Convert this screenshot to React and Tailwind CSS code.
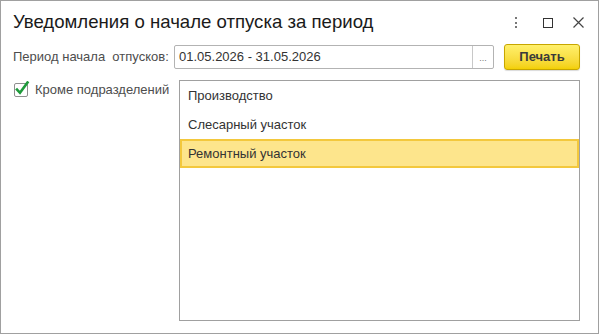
import React from "react";

const items = ["Производство", "Слесарный участок", "Ремонтный участок"];

const App = () => {
  return (
    <div
      className="w-[599px] h-[334px] border border-[#a0a0a0] bg-white flex flex-col text-[#333]"
      style={{ fontFamily: '"Liberation Sans", Arial, sans-serif' }}
    >
      {/* title bar */}
      <div className="h-[43px] flex items-center pl-[12px] pr-[14px]">
        <div className="text-[18.6px] leading-none text-[#1a1a1a] flex-1">
          Уведомления о начале отпуска за период
        </div>
        <div className="flex items-center">
          <div className="flex flex-col gap-[2.5px] w-[2px]">
            <span className="block w-[2px] h-[2px] bg-[#777]" />
            <span className="block w-[2px] h-[2px] bg-[#777]" />
            <span className="block w-[2px] h-[2px] bg-[#777]" />
          </div>
          <div className="ml-[26px] w-[10px] h-[10px] border-[1.5px] border-[#333]" />
          <svg className="ml-[20px]" width="11" height="11" viewBox="0 0 11 11">
            <path d="M0.5 0.5 L10.5 10.5 M10.5 0.5 L0.5 10.5" stroke="#444" strokeWidth="1.2" />
          </svg>
        </div>
      </div>

      {/* period row */}
      <div className="h-[26px] flex items-center pl-[12px]">
        <div className="w-[161px] text-[13px] text-[#4d4d4d] whitespace-pre">
          Период начала  отпусков:
        </div>
        <div className="w-[320px] h-[24px] border border-[#b3b3b3] rounded-[2px] flex bg-white">
          <div className="flex-1 flex items-center pl-[4px] text-[13px] text-[#333]">
            01.05.2026 - 31.05.2026
          </div>
          <div className="w-[21px] border-l border-[#c8c8c8] flex items-end justify-center pb-[5px] text-[9px] leading-none text-[#777]">
            ...
          </div>
        </div>
        <button className="ml-[10px] w-[76px] h-[26px] rounded-[3px] border border-[#c7a600] bg-gradient-to-b from-[#fff06a] to-[#f3d000] text-[13px] font-bold text-[#3a3a3a] shadow-[0_1px_1px_rgba(0,0,0,0.15)]">
          Печать
        </button>
      </div>

      {/* body */}
      <div className="flex mt-[10px]">
        <div className="w-[178px] pl-[13px] pt-[1px] flex items-start">
          <svg width="16" height="16" viewBox="0 0 16 16" className="shrink-0">
            <rect x="0.5" y="2.5" width="13" height="13" rx="1.5" fill="#fff" stroke="#8f8f8f" />
            <path d="M3 8.5 L6 11.8 L13.5 1.5" fill="none" stroke="#1f9a3b" strokeWidth="2.6" strokeLinecap="square" />
          </svg>
          <span className="ml-[5px] mt-[1px] text-[13px] text-[#4d4d4d] leading-[16px]">
            Кроме подразделений
          </span>
        </div>
        <div className="w-[401px] h-[241px] border border-[#a0a0a0] bg-white flex flex-col">
          {items.map((item, i) => (
            <div
              key={item}
              className={
                i === 2
                  ? "h-[29px] flex items-center pl-[6px] bg-[#fde58c] border-2 border-[#f3c83d] text-[13px] text-[#333]"
                  : "h-[29px] flex items-center pl-[8px] text-[13px] text-[#333]"
              }
            >
              {item}
            </div>
          ))}
        </div>
      </div>
    </div>
  );
};

export default App;
